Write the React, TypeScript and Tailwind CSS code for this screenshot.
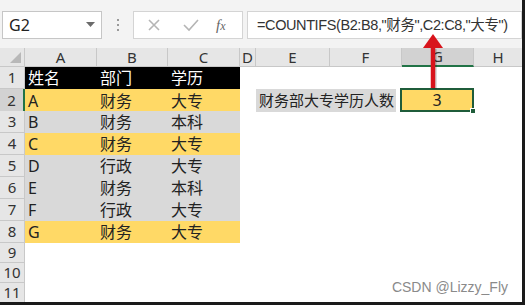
import React from "react";

const font = { fontFamily: '"Noto Sans", "Noto Sans CJK SC", sans-serif' };

type Row = { n: number; a: string; b: string; c: string; kind: "head" | "y" | "g" | "e" };
const rows: Row[] = [
  { n: 1, a: "姓名", b: "部门", c: "学历", kind: "head" },
  { n: 2, a: "A", b: "财务", c: "大专", kind: "y" },
  { n: 3, a: "B", b: "财务", c: "本科", kind: "g" },
  { n: 4, a: "C", b: "财务", c: "大专", kind: "y" },
  { n: 5, a: "D", b: "行政", c: "大专", kind: "g" },
  { n: 6, a: "E", b: "财务", c: "本科", kind: "g" },
  { n: 7, a: "F", b: "行政", c: "大专", kind: "g" },
  { n: 8, a: "G", b: "财务", c: "大专", kind: "y" },
  { n: 9, a: "", b: "", c: "", kind: "e" },
  { n: 10, a: "", b: "", c: "", kind: "e" },
  { n: 11, a: "", b: "", c: "", kind: "e" },
];

const cols = "grid grid-cols-[25px_72px_71px_72px_16px_74px_72px_72px_1fr]";

export default function App() {
  return (
    <div
      className="relative w-[525px] h-[305px] overflow-hidden bg-[#f3f3f3] border-r-[3px] border-b-[3px] border-[#1a1a1a] text-[#222]"
      style={font}
    >
      {/* formula bar */}
      <div className="flex items-center h-[28px] mt-[11px] pl-[2px]">
        <div className="w-[100px] h-[28px] bg-white border border-[#c6c6c6] flex items-center justify-between pl-[6px] pr-[6px]">
          <span className="text-[16px] leading-none">G2</span>
          <svg width="9" height="6" viewBox="0 0 9 6">
            <path d="M0 0 L9 0 L4.5 5 Z" fill="#6b6b6b" />
          </svg>
        </div>
        <div className="w-[31px] flex flex-col items-center gap-[3px]">
          <div className="w-[2px] h-[2px] bg-[#9a9a9a]" />
          <div className="w-[2px] h-[2px] bg-[#9a9a9a]" />
          <div className="w-[2px] h-[2px] bg-[#9a9a9a]" />
        </div>
        <div className="w-[110px] h-[28px] bg-white border border-[#d4d4d4] flex items-center">
          <svg className="ml-[13px]" width="14" height="14" viewBox="0 0 14 14">
            <path d="M2 2 L12 12 M12 2 L2 12" stroke="#b5b5b5" strokeWidth="1.6" />
          </svg>
          <svg className="ml-[22px]" width="16" height="14" viewBox="0 0 16 14">
            <path d="M1 7 L6 12 L15 2" stroke="#b5b5b5" strokeWidth="1.6" fill="none" />
          </svg>
          <span
            className="ml-[17px] text-[15px] italic text-[#666] leading-none"
            style={{ fontFamily: '"Liberation Serif", serif' }}
          >
            f<span className="text-[12px]">x</span>
          </span>
        </div>
        <div className="ml-[4px] flex-1 h-[28px] bg-white border border-[#d4d4d4] flex items-center pl-[9px] overflow-hidden">
          <span
            className="whitespace-nowrap text-[14.5px] leading-none tracking-[-0.4px] text-[#333]"
            style={{ fontFamily: '"Liberation Sans", "Noto Sans CJK SC", sans-serif' }}
          >
            =COUNTIFS(B2:B8,"财务",C2:C8,"大专")
          </span>
        </div>
      </div>

      {/* column headers */}
      <div className={`${cols} mt-[9px] h-[19px] bg-[#e6e6e6] text-[15px] text-[#333] leading-none`}>
        <div className="relative border-r border-b border-[#c8c8c8]">
          <svg className="absolute right-[3px] bottom-[3px]" width="11" height="11" viewBox="0 0 11 11">
            <path d="M11 0 L11 11 L0 11 Z" fill="#b8b8b8" />
          </svg>
        </div>
        {["A", "B", "C", "D", "E", "F"].map((c) => (
          <div key={c} className="flex items-center justify-center border-r border-b border-[#c8c8c8]">
            {c}
          </div>
        ))}
        <div className="flex items-center justify-center bg-[#d2d2d2] border-r border-[#c8c8c8] border-b-2 border-b-[#217346]">
          G
        </div>
        <div className="flex items-center justify-center border-b border-[#c8c8c8]">H</div>
      </div>

      {/* rows */}
      <div className="bg-white">
        {rows.map((r) => {
          const h = r.n <= 8 ? "h-[22px]" : "h-[20px]";
          const fill =
            r.kind === "head"
              ? "bg-black text-white"
              : r.kind === "y"
              ? "bg-[#ffd966]"
              : r.kind === "g"
              ? "bg-[#d9d9d9]"
              : "";
          return (
            <div key={r.n} className={`${cols} ${h} text-[16px] leading-none overflow-visible`}>
              <div
                className={`flex items-center justify-center text-[15px] text-[#333] border-b border-[#c8c8c8] ${
                  r.n === 2
                    ? "bg-[#d2d2d2] border-r-2 border-r-[#217346]"
                    : "bg-[#e6e6e6] border-r border-r-[#c8c8c8]"
                }`}
              >
                {r.n}
              </div>
              <div className={`col-span-3 grid grid-cols-[72px_71px_72px] ${fill}`}>
                <div className="flex items-center pl-[3px] whitespace-nowrap">{r.a}</div>
                <div className="flex items-center pl-[3px] whitespace-nowrap">{r.b}</div>
                <div className="flex items-center pl-[3px] whitespace-nowrap">{r.c}</div>
              </div>
              <div />
              {r.n === 2 ? (
                <>
                  <div className="col-span-2 flex">
                    <div className="w-[140px] h-full bg-[#d9d9d9] flex items-center pl-[3px] text-[15px] whitespace-nowrap text-[#222]">
                      财务部大专学历人数
                    </div>
                  </div>
                  <div className="relative h-[24px] -mt-[1px] -ml-[2px] bg-[#ffd966] border-2 border-[#1f5c3a] flex items-center justify-center">
                    3
                    <div className="absolute -right-[4px] -bottom-[4px] w-[6px] h-[6px] bg-[#1f5c3a] border border-white" />
                  </div>
                  <div />
                </>
              ) : (
                <>
                  <div />
                  <div />
                  <div />
                  <div />
                </>
              )}
            </div>
          );
        })}
      </div>

      {/* red arrow */}
      <svg className="absolute left-[421px] top-[33px]" width="24" height="58" viewBox="0 0 24 58">
        <path d="M13.5 16 L13.5 56" stroke="rgba(0,0,0,0.18)" strokeWidth="4.5" />
        <path d="M12 15 L12 55" stroke="#d8141c" strokeWidth="4.5" />
        <path d="M12 1 L22 15 L2 15 Z" fill="#d8141c" />
      </svg>

      {/* watermark */}
      <div
        className="absolute right-[14px] bottom-[8px] text-[14px] text-[#8a8a8a] leading-none"
        style={{ fontFamily: '"Liberation Sans", sans-serif' }}
      >
        CSDN @Lizzy_Fly
      </div>
    </div>
  );
}
